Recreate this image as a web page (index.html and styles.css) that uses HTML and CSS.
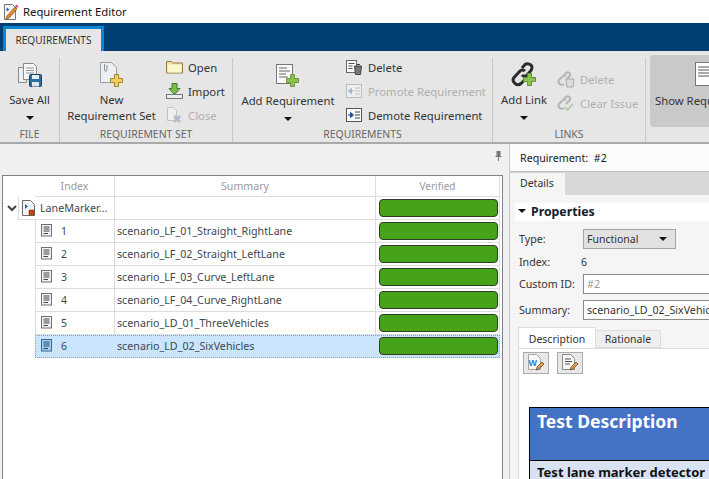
FILE: index.html
```html
<!DOCTYPE html>
<html lang="en">
<head>
<meta charset="utf-8">
<title>Requirement Editor</title>
<link rel="stylesheet" href="styles.css">
</head>
<body>
<svg class="defs" width="0" height="0">
  <defs>
    <symbol id="rowdoc" viewBox="0 0 12 13">
      <rect x=".5" y=".5" width="10" height="11.5" fill="#f2f2f2" stroke="#6b7077"/>
      <path d="M2.5 3h6M2.5 5h6M2.5 7h6M2.5 9.500h4.500" stroke="#3d444c" fill="none"/>
    </symbol>
    <symbol id="rowdocsel" viewBox="0 0 12 13">
      <rect x=".5" y=".5" width="10" height="11.500" fill="#a9cdea" stroke="#2f6796"/>
      <path d="M2.500 3h6M2.500 5h6M2.500 7h6M2.500 9.500h4.500" stroke="#1d4a78" fill="none"/>
    </symbol>
  </defs>
</svg>
<div class="app">
  <header class="titlebar">
    <svg class="title-icon" width="16" height="18" viewBox="0 0 16 18"><path d="M1.500 1.500h8l3 3v12h-11z" fill="#f4f4f4" stroke="#777"/><path d="M3.500 4.500l3 2-3 2z" fill="#2a62a8"/><path d="M3 16l1-3 8-9 2 2-8 9z" fill="#e08a25" stroke="#8c4a1c" stroke-width=".7"/><path d="M12 3l2 2 1.500-1.500-2-2z" fill="#d6455a"/></svg>
    <span class="title-text">Requirement Editor</span>
  </header>
  <div class="tabstrip"><div class="ribbon-tab">REQUIREMENTS</div></div>
  <div class="ribbon">
    <section class="group group-file">
      <div class="group-body">
        <div class="big-btn">
          <svg class="big-icon" width="26" height="28" viewBox="0 0 26 28"><path d="M1.500 6.500h8v15h-8z" fill="#eee" stroke="#8a8a8a"/><path d="M6.500 2.500h10l3 3v13h-13z" fill="#f7f7f7" stroke="#8a8a8a"/><path d="M9 7h8M9 9.500h8M9 12h8" stroke="#8b98a5"/><rect x="12.500" y="13.500" width="12" height="12" rx="1" fill="#2f6f9f" stroke="#1c3e5c"/><rect x="15" y="14" width="7" height="4" fill="#e7f0f7"/><rect x="15" y="21" width="7" height="4.500" fill="#dfe5ea"/></svg>
          <span>Save All</span><i class="caret"></i>
        </div>
      </div>
      <div class="group-label">FILE</div>
    </section>
    <section class="group group-set">
      <div class="group-body">
        <div class="big-btn btn-new">
          <svg class="big-icon" width="26" height="28" viewBox="0 0 26 28"><path d="M1.500 1.500h11l5 5v15h-16z" fill="#edf0f3" stroke="#9ba1a6"/><path d="M5.500 3v6a1.200 1.200 0 0 0 2.400 0V4" fill="none" stroke="#8a8f94"/><path d="M15.500 13.500h4v4h4v4h-4v4h-4v-4h-4v-4h4z" fill="#f1cf5d" stroke="#a58428"/></svg>
          <span>New<br>Requirement Set</span>
        </div>
        <div class="stack">
          <div class="small-btn"><svg width="17" height="14" viewBox="0 0 17 14"><path d="M.5 1.500h5l1.500 1.500h9.500v10H.5z" fill="#f3dd96" stroke="#8f7d45"/><path d="M1.500 4.500h14v8h-14z" fill="#fdf5cf"/></svg><span>Open</span></div>
          <div class="small-btn"><svg width="17" height="16" viewBox="0 0 17 16"><path d="M6 .5h5v5h3l-5.500 6-5.500-6h3z" fill="#7cc04a" stroke="#3f7d22"/><rect x=".5" y="11.500" width="16" height="4" fill="#eee" stroke="#777"/></svg><span>Import</span></div>
          <div class="small-btn off"><svg width="17" height="16" viewBox="0 0 17 16"><path d="M1.500 .5h6l3 3v10h-9z" fill="#efefef" stroke="#c2c2c2"/><path d="M8 9l6 6M14 9l-6 6" stroke="#aebccb" stroke-width="2.500"/></svg><span>Close</span></div>
        </div>
      </div>
      <div class="group-label">REQUIREMENT SET</div>
    </section>
    <section class="group group-req">
      <div class="group-body">
        <div class="big-btn btn-add">
          <svg class="big-icon" width="26" height="24" viewBox="0 0 26 24"><rect x="1.500" y=".5" width="16" height="19" fill="#fafafa" stroke="#777"/><path d="M4 4h8M4 7h11M4 10h7M4 13h9" stroke="#666"/><path d="M15.500 10.500h4v4h4v4h-4v4h-4v-4h-4v-4h4z" fill="#8cc04f" stroke="#6a9a3a"/></svg>
          <span>Add Requirement</span><i class="caret"></i>
        </div>
        <div class="stack stack-wide">
          <div class="small-btn"><svg width="17" height="15" viewBox="0 0 17 15"><rect x=".5" y=".5" width="10" height="12" fill="#fafafa" stroke="#666"/><path d="M2.500 3.500h6M2.500 6h4M2.500 8.500h4" stroke="#555"/><path d="M8.500 6h7l-1 8.500h-5zM11 4.500h3" fill="#777" stroke="#444"/></svg><span>Delete</span></div>
          <div class="small-btn off"><svg width="17" height="15" viewBox="0 0 17 15"><rect x=".5" y=".5" width="15" height="13" fill="#eee" stroke="#bdbdbd"/><path d="M9 4h5M9 7h5M9 10h5" stroke="#c0c0c0"/><path d="M2.500 7l3-2.500V9.500zM5 7h3" fill="#9eb5cf" stroke="#9eb5cf"/></svg><span>Promote Requirement</span></div>
          <div class="small-btn"><svg width="17" height="15" viewBox="0 0 17 15"><rect x=".5" y=".5" width="15" height="13" fill="#fafafa" stroke="#555"/><path d="M9 4h5M9 7h5M9 10h5" stroke="#444"/><path d="M7.500 7l-3-2.500V9.500zM2 7h3" fill="#1f4f8c" stroke="#1f4f8c"/></svg><span>Demote Requirement</span></div>
        </div>
      </div>
      <div class="group-label">REQUIREMENTS</div>
    </section>
    <section class="group group-links">
      <div class="group-body">
        <div class="big-btn btn-link">
          <svg class="big-icon" width="26" height="26" viewBox="0 0 26 26"><g fill="none" stroke="#2b2b2b" stroke-width="3"><path d="M11 6l3-3.500c2-1.500 7-.5 7 3 0 1.500-.5 2.500-1.500 3.500L16 13c-1.500 1.500-4 1.500-5 0"/><path d="M14 9c-1.500-1.500-4-1.500-5 0l-6 6.500c-3 4 3 9.500 7 6l3-3"/></g><path d="M16.500 11.500h4v4h4v4h-4v4h-4v-4h-4v-4h4z" fill="#8cc04f" stroke="#5f9238"/></svg>
          <span>Add Link</span><i class="caret"></i>
        </div>
        <div class="stack stack-links">
          <div class="small-btn off"><svg width="18" height="17" viewBox="0 0 18 17"><g fill="none" stroke="#b5b5b5" stroke-width="2"><path d="M7 4l2-2c2-1.500 5 0 4 3L9 9"/><path d="M9 5C7 4 6 5 5 6L2 9c-2 3 2 6 5 4"/></g><path d="M9 8h8l-1 8h-6z" fill="#ddd" stroke="#aaa"/></svg><span>Delete</span></div>
          <div class="small-btn off"><svg width="18" height="17" viewBox="0 0 18 17"><g fill="none" stroke="#b5b5b5" stroke-width="2"><path d="M7 4l2-2c2-1.500 5 0 4 3L9 9"/><path d="M9 5C7 4 6 5 5 6L2 9c-2 3 2 6 5 4"/></g><path d="M8 12l2.500 3L16 9" fill="none" stroke="#a9c79a" stroke-width="1.500"/></svg><span>Clear Issue</span></div>
        </div>
      </div>
      <div class="group-label">LINKS</div>
    </section>
    <div class="show-btn">
      <svg class="show-icon" width="26" height="24" viewBox="0 0 26 24"><rect x=".5" y=".5" width="20" height="23" fill="#fff" stroke="#777"/><path d="M3 5h15M3 8h15M3 11h15M3 14h15" stroke="#555"/></svg>
      <span>Show Requirements</span>
    </div>
  </div>
  <main class="workspace">
    <div class="left-pane">
      <div class="pin-row"><svg width="7" height="10" viewBox="0 0 7 10"><path d="M1.500 0h4v5h1v1H4v4H3V6H.5V5h1z" fill="#777"/></svg></div>
      <div class="tree">
        <div class="tree-head"><div class="cell c-index">Index</div><div class="cell c-summary">Summary</div><div class="cell c-verified">Verified</div></div>
        <div class="row row-root">
          <svg class="chev" width="10" height="7" viewBox="0 0 10 7"><path d="M1 1l4 4 4-4" fill="none" stroke="#444" stroke-width="2"/></svg>
          <div class="cell c-index-root">
            <svg width="13" height="16" viewBox="0 0 13 16"><path d="M.5.500h8l4 4v11H.5z" fill="#f4f4f4" stroke="#6b6b6b"/><path d="M3 4l3 2.500L3 9z" fill="#2a62a8"/><rect x="7" y="10" width="5" height="5" fill="#c8441c" stroke="#7a2a10" stroke-width=".5"/></svg>
            <span>LaneMarker...</span>
          </div>
          <div class="cell c-summary"></div>
          <div class="cell c-verified"><div class="bar"></div></div>
        </div>
        <div class="row row-child"><div class="cell c-index"><svg class="row-ic" width="12" height="13"><use href="#rowdoc"/></svg><span>1</span></div><div class="cell c-summary">scenario_LF_01_Straight_RightLane</div><div class="cell c-verified"><div class="bar"></div></div></div>
        <div class="row row-child"><div class="cell c-index"><svg class="row-ic" width="12" height="13"><use href="#rowdoc"/></svg><span>2</span></div><div class="cell c-summary">scenario_LF_02_Straight_LeftLane</div><div class="cell c-verified"><div class="bar"></div></div></div>
        <div class="row row-child"><div class="cell c-index"><svg class="row-ic" width="12" height="13"><use href="#rowdoc"/></svg><span>3</span></div><div class="cell c-summary">scenario_LF_03_Curve_LeftLane</div><div class="cell c-verified"><div class="bar"></div></div></div>
        <div class="row row-child"><div class="cell c-index"><svg class="row-ic" width="12" height="13"><use href="#rowdoc"/></svg><span>4</span></div><div class="cell c-summary">scenario_LF_04_Curve_RightLane</div><div class="cell c-verified"><div class="bar"></div></div></div>
        <div class="row row-child"><div class="cell c-index"><svg class="row-ic" width="12" height="13"><use href="#rowdoc"/></svg><span>5</span></div><div class="cell c-summary">scenario_LD_01_ThreeVehicles</div><div class="cell c-verified"><div class="bar"></div></div></div>
        <div class="row row-child row-selected"><div class="cell c-index"><svg class="row-ic" width="12" height="13"><use href="#rowdocsel"/></svg><span>6</span></div><div class="cell c-summary">scenario_LD_02_SixVehicles</div><div class="cell c-verified"><div class="bar"></div></div></div>
      </div>
    </div>
    <aside class="details">
      <div class="details-title">Requirement:&nbsp; #2</div>
      <div class="details-tabs"><div class="details-tab">Details</div></div>
      <div class="details-body">
        <div class="prop-head"><i class="caret caret-prop"></i><span>Properties</span></div>
        <div class="form">
          <label>Type:</label><div class="select"><span>Functional</span><i class="caret"></i></div>
          <label>Index:</label><div class="value">6</div>
          <label>Custom ID:</label><div class="input placeholder">#2</div>
          <label>Summary:</label><div class="input">scenario_LD_02_SixVehicles</div>
        </div>
        <div class="sub-tabs"><div class="sub-tab active">Description</div><div class="sub-tab">Rationale</div></div>
        <div class="sub-panel">
          <div class="tools">
            <div class="tool"><svg width="18" height="18" viewBox="0 0 18 18"><path d="M1.500.5h8l4 4v11h-12z" fill="#f8f8f8" stroke="#a5a5a5"/><text class="word-w" x="1.500" y="12">W</text><path d="M9 16l1-3 5-5 2 2-5 5z" fill="#e39b3c" stroke="#444" stroke-width=".7"/></svg></div>
            <div class="tool"><svg width="18" height="18" viewBox="0 0 18 18"><path d="M1.500.5h8l4 4v11h-12z" fill="#f8f8f8" stroke="#888"/><path d="M4 5h6M4 7.500h7M4 10h5" stroke="#555"/><path d="M9 16l1-3 5-5 2 2-5 5z" fill="#e39b3c" stroke="#444" stroke-width=".7"/></svg></div>
          </div>
          <div class="doc-table">
            <div class="doc-head">Test Description</div>
            <div class="doc-row">Test lane marker detector</div>
          </div>
        </div>
      </div>
    </aside>
  </main>
</div>
</body>
</html>
```

FILE: styles.css
```css
* { box-sizing: border-box; }
html, body { margin: 0; padding: 0; width: 709px; height: 479px; overflow: hidden; }
body { font-family: "Noto Sans", "Open Sans", sans-serif; font-size: 10.500px; color: #333; background: #f0f0f0; }
.defs { position: absolute; }
.app { width: 709px; height: 479px; display: flex; flex-direction: column; overflow: hidden; }

.titlebar { height: 23px; background: #fff; display: flex; align-items: center; padding-left: 3px; gap: 4px; flex: none; }
.title-text { font-size: 11.300px; color: #111; }

.tabstrip { height: 28px; background: #003f73; padding: 3px 0 0 3px; flex: none; }
.ribbon-tab { width: 101px; height: 25px; background: #e6e6e6; border: solid #0a86d0; border-width: 3px 3px 0 3px; font-size: 10.100px; color: #333; display: flex; align-items: center; justify-content: center; }

.ribbon { height: 93px; background: #e6e6e6; border-bottom: 2px solid #a9a9a9; display: flex; flex: none; padding-top: 7px; overflow: hidden; font-size: 11.300px; }
.group { display: flex; flex-direction: column; border-right: 1px solid #c8c8c8; flex: none; }
.group-file { width: 60px; }
.group-set { width: 173px; }
.group-req { width: 260px; }
.group-links { width: 153px; }
.group-body { height: 71px; display: flex; }
.group-label { height: 15px; font-size: 10.400px; color: #666; text-align: center; line-height: 15px; }

.big-btn { display: flex; flex-direction: column; align-items: center; text-align: center; line-height: 16px; color: #333; flex: none; width: 59px; padding-top: 3px; }
.big-btn span { display: block; white-space: nowrap; }
.big-icon { flex: none; height: 28px; margin-bottom: 3px; }
.caret { display: block; width: 0; height: 0; border: 4px solid transparent; border-top: 4px solid #111; border-bottom: 0; margin-top: 8px; border-left-width: 4.500px; border-right-width: 4.500px; }
.btn-new { width: 103px; padding-left: 0; }
.btn-add { width: 110px; padding-top: 4px; }
.btn-link { width: 62px; }

.stack { display: flex; flex-direction: column; gap: 2px; margin-top: -2px; margin-left: 3px; }
.stack-wide { margin-left: 3px; }
.stack-links { margin-top: 10px; margin-left: 2px; }
.small-btn { display: flex; align-items: center; gap: 5px; height: 22px; white-space: nowrap; color: #333; }
.small-btn svg { flex: none; }
.small-btn.off { color: #b0b0b0; }

.show-btn { width: 100px; height: 72px; margin: -3px 0 0 4px; background: #c9c9c9; border-radius: 4px; display: flex; flex-direction: column; padding: 7px 0 0 5px; color: #333; flex: none; }
.show-icon { margin-left: 40px; margin-bottom: 7px; }
.show-btn span { white-space: nowrap; }

.workspace { flex: 1; display: flex; min-height: 0; }
.left-pane { width: 509px; flex: none; padding: 0 0 0 2px; display: flex; flex-direction: column; }
.pin-row { height: 31px; padding: 7px 7px 0 0; display: flex; justify-content: flex-end; align-items: flex-start; flex: none; }
.tree { width: 501px; flex: 1; background: #fff; border: 1px solid #7d8489; border-bottom: 0; }

.tree-head { height: 21px; display: flex; margin-left: 32px; width: 465px; }
.tree-head .cell { color: #9a9a9a; justify-content: center; }
.cell { display: flex; align-items: center; height: 100%; white-space: nowrap; border-right: 1px solid #dcdcdc; border-bottom: 1px solid #dcdcdc; color: #3d4750; padding-bottom: 1px; }
.c-index { width: 80px; flex: none; }
.c-summary { width: 261px; flex: none; padding-left: 2px; font-size: 10.700px; }
.c-verified { width: 124px; flex: none; padding-left: 3px; padding-bottom: 0; }
.tree-head .c-summary { font-size: 10.600px; padding-left: 0; }
.tree-head .c-verified { font-size: 10px; padding-left: 0; }

.row { height: 23px; width: 497px; display: flex; align-items: center; }
.row-root { padding-left: 3px; }
.chev { flex: none; width: 12px; }
.c-index-root { width: 97px; flex: none; border-left: 1px solid #dcdcdc; padding-left: 3px; gap: 5px; font-size: 10.700px; }
.row-child { margin-left: 32px; width: 465px; }
.row-child .c-index { border-left: 1px solid #dcdcdc; padding-left: 5px; }
.row-ic { flex: none; margin-right: 8px; }
.bar { width: 119px; height: 18px; background: #46a219; border: 1.500px solid #2f3b2b; border-radius: 4px; }

.row-selected { background: #cbe5ff; outline: 1px dotted #f0882a; outline-offset: -1px; }
.row-selected .cell { border-color: #cbe5ff; }

.details { flex: 1; min-width: 0; display: flex; flex-direction: column; border-left: 1px solid #c8c8c8; overflow: hidden; }
.details-title { height: 28px; background: #fbfbfb; border-bottom: 1px solid #bdbdbd; padding-left: 10px; line-height: 28px; flex: none; color: #222; white-space: nowrap; font-size: 10.700px; }
.details-tabs { height: 23px; background: #d8d8d8; padding-top: 1px; flex: none; }
.details-tab { width: 55px; height: 22px; background: #f5f5f5; padding-left: 10px; line-height: 20px; color: #333; }
.details-body { flex: 1; background: #f5f5f5; padding: 8px 0 0 5px; min-height: 0; }
.prop-head { height: 18px; background: #fff; display: flex; align-items: center; gap: 5px; padding-left: 3px; padding-bottom: 2px; font-weight: 700; font-size: 12.300px; color: #10202c; }
.caret-prop { margin-top: 0; }

.form { display: grid; grid-template-columns: 64px 140px; grid-template-rows: 23px 22px 26px 26px; padding: 8px 0 0 4px; align-items: start; }
.form label { color: #333; white-space: nowrap; line-height: 20px; font-size: 10.700px; }
.select { width: 93px; height: 20px; background: #e1e1e1; border: 1px solid #a5a5a5; display: flex; align-items: center; justify-content: space-between; padding: 0 8px 0 3px; }
.select .caret { margin-top: 0; }
.value { line-height: 20px; margin-left: -2px; }
.input { height: 20px; width: 140px; background: #fff; border: 1px solid #8a8a8a; padding-left: 3px; line-height: 18px; white-space: nowrap; overflow: hidden; font-size: 10.700px; }
.placeholder { color: #999; }

.sub-tabs { display: flex; margin: 2px 0 0 3px; align-items: flex-end; height: 21px; border-bottom: 1px solid #dcdcdc; }
.sub-tab { width: 65px; height: 18px; background: #efefef; border: 1px solid #dcdcdc; border-left: 0; text-align: center; line-height: 17px; color: #333; }
.sub-tab.active { width: 78px; height: 21px; background: #fff; border-left: 1px solid #dcdcdc; border-bottom: 0; line-height: 23px; }
.sub-panel { margin-left: 3px; height: 130px; background: #fff; border-left: 1px solid #dcdcdc; padding: 3px 0 0 4px; }
.tools { display: flex; gap: 8px; }
.tool { width: 26px; height: 22px; background: #e8e8e8; border: 1px solid #ababab; display: flex; align-items: center; justify-content: center; }
.word-w { font-family: "Liberation Sans", sans-serif; font-size: 9px; font-weight: 700; fill: #2a7fd8; }
.doc-table { margin: 33px 0 0 6px; width: 200px; border: solid #000; border-width: 1px 0 0 1px; font-weight: 700; }
.doc-head { height: 53px; background: #4472c4; color: #fff; font-size: 17.500px; padding: 1px 0 0 7px; border-bottom: 1px solid #000; white-space: nowrap; }
.doc-row { height: 20px; background: #d9e2f3; color: #111; font-size: 13px; padding: 2px 0 0 7px; white-space: nowrap; }
```
